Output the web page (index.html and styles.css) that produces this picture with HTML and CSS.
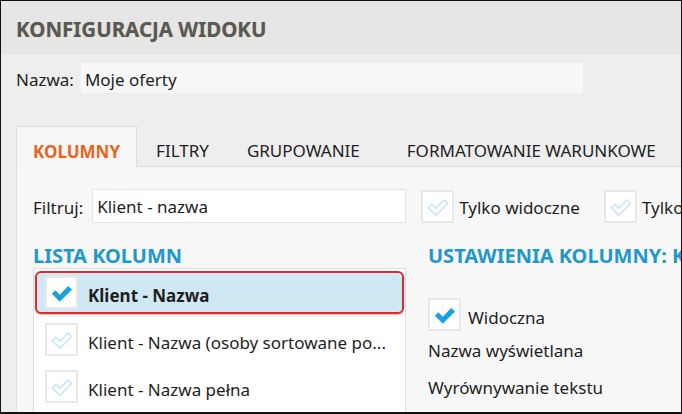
FILE: index.html
```html
<!DOCTYPE html>
<html lang="pl">
<head>
  <meta charset="UTF-8">
  <title>Konfiguracja widoku</title>
  <link rel="stylesheet" href="styles.css">
</head>
<body>
  <div class="window">
    <div class="header">KONFIGURACJA WIDOKU</div>

    <div class="name-row">
      <span class="lbl">Nazwa:</span>
      <div class="name-input">Moje oferty</div>
    </div>

    <div class="tabs">
      <div class="tab active">KOLUMNY</div>
      <div class="tab">FILTRY</div>
      <div class="tab">GRUPOWANIE</div>
      <div class="tab wide">FORMATOWANIE WARUNKOWE</div>
    </div>

    <div class="panel">
      <div class="filter-row">
        <span class="lbl">Filtruj:</span>
        <div class="filter-input">Klient - nazwa</div>
        <span class="chk light">
          <svg viewBox="0 0 33 33"><path d="M6 18 L10 14 L14.5 18.5 L24 9 L28 13 L14.5 26.5 Z"/></svg>
        </span>
        <span class="chk-label">Tylko widoczne</span>
        <span class="chk light">
          <svg viewBox="0 0 33 33"><path d="M6 18 L10 14 L14.5 18.5 L24 9 L28 13 L14.5 26.5 Z"/></svg>
        </span>
        <span class="chk-label">Tylko zaznaczone</span>
      </div>

      <div class="columns">
        <div class="col-left">
          <h2>LISTA KOLUMN</h2>
          <div class="list">
            <div class="item selected">
              <span class="chk full">
                <svg viewBox="0 0 33 33"><path d="M5.5 18 L9.5 14 L14.5 19 L24 9 L28.5 13 L14.5 27 Z"/></svg>
              </span>
              <span class="item-text">Klient - Nazwa</span>
            </div>
            <div class="item">
              <span class="chk light">
                <svg viewBox="0 0 33 33"><path d="M6 18 L10 14 L14.5 18.5 L24 9 L28 13 L14.5 26.5 Z"/></svg>
              </span>
              <span class="item-text">Klient - Nazwa (osoby sortowane po...</span>
            </div>
            <div class="item">
              <span class="chk light">
                <svg viewBox="0 0 33 33"><path d="M6 18 L10 14 L14.5 18.5 L24 9 L28 13 L14.5 26.5 Z"/></svg>
              </span>
              <span class="item-text">Klient - Nazwa pełna</span>
            </div>
          </div>
        </div>

        <div class="col-right">
          <h2>USTAWIENIA KOLUMNY: KLIENT - NAZWA</h2>
          <div class="visible-row">
            <span class="chk full">
              <svg viewBox="0 0 33 33"><path d="M5.5 18 L9.5 14 L14.5 19 L24 9 L28.5 13 L14.5 27 Z"/></svg>
            </span>
            <span class="chk-label">Widoczna</span>
          </div>
          <div class="setting">Nazwa wyświetlana</div>
          <div class="setting">Wyrównywanie tekstu</div>
        </div>
      </div>
    </div>
  </div>
</body>
</html>
```

FILE: styles.css
```css
body { margin: 0; font-family: "Noto Sans", "Open Sans", sans-serif; color: #1e1e1e; }
.window { width: 682px; height: 414px; box-sizing: border-box; border: 1px solid #111; border-bottom-width: 2px; background: #eeeeee; overflow: hidden; }

.header { height: 54px; background: #e6e6e6; padding-left: 15px; font-size: 20.5px; font-weight: bold; color: #585858; line-height: 56px; text-shadow: 0 0 1px #c8b48c; white-space: nowrap; }

.name-row { display: flex; align-items: center; padding: 8px 0 0 15px; height: 30px; }
.lbl { font-size: 17px; margin-right: 7px; padding-top: 3px; }
.name-input { width: 498px; height: 28px; padding-top: 2px; line-height: 30px; background: #f7f7f7; padding-left: 4px; font-size: 17px; }

.tabs { display: flex; margin: 33px 0 0 15px; height: 40px; border-bottom: 1px solid #dcdcdc; white-space: nowrap; }
.tab { font-size: 17px; height: 40px; box-sizing: border-box; padding: 5px 19px 0; line-height: 40px; color: #222; }
.tab.wide { padding-left: 28px; }
.tab.active { background: #f7f7f7; color: #e8641b; font-weight: bold; padding: 5px 16px 0; border: 1px solid #dcdcdc; border-bottom: none; margin-bottom: -1px; height: 41px; }

.panel { margin-left: 15px; background: #f7f7f7; border-left: 1px solid #e2e2e2; padding: 22px 0 0 16px; height: 300px; white-space: nowrap; }

.filter-row { display: flex; align-items: center; height: 34px; }
.filter-row .lbl { margin-right: 9px; }
.filter-input { width: 308px; height: 32px; line-height: 34px; background: #fff; border: 1px solid #e4e4e4; padding-left: 4px; font-size: 17px; margin-right: 15px; flex: none; }
.chk-label { font-size: 17px; margin: 0 24px 0 5px; padding-top: 3px; }

.chk { width: 29px; height: 29px; border: 2px solid #e8e8e8; background: #fff; display: inline-flex; flex: none; }
.chk svg { width: 29px; height: 29px; }
.chk.full path { fill: #1ba0e0; }
.chk.light path { fill: #fff; stroke: #bfe5f6; stroke-width: 1.6; }

.columns { display: flex; margin-top: 21px; }
h2 { margin: 0; font-size: 20px; font-weight: bold; color: #2198c9; height: 23px; line-height: 23px; }

.col-left { width: 373px; flex: none; }
.list { margin-top: 1px; height: 200px; background: #fff; border: 1px solid #dedede; border-bottom: none; padding: 2px 1px 0; }
.item { display: flex; align-items: center; height: 43px; padding-left: 8px; margin-bottom: 4px; box-sizing: border-box; border: 2px solid transparent; }
.item-text { font-size: 17px; margin-left: 10px; padding-top: 6px; }
.item.selected { background: #cfe8f4; border-color: #e02a30; border-radius: 6px; box-shadow: 0 1px 2px rgba(0,0,0,0.25); }
.item.selected .item-text { font-weight: bold; }

.col-right { padding-left: 22px; }
.visible-row { display: flex; align-items: center; margin-top: 31px; }
.visible-row .chk-label { margin-left: 7px; padding-top: 6px; }
.setting { font-size: 17px; margin-top: 5px; height: 30px; line-height: 30px; }
.setting + .setting { margin-top: 7px; }
```
